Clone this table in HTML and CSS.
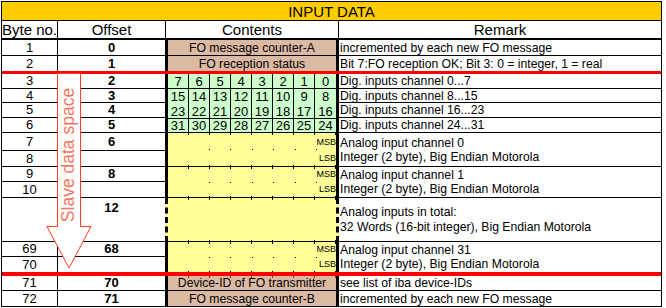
FILE: index.html
```html
<!DOCTYPE html>
<html>
<head>
<meta charset="utf-8">
<title>Input data</title>
<link rel="stylesheet" href="styles.css">
</head>
<body>
<div class="page">
  <div class="sheet">
    <div class="title">INPUT DATA</div>
    <div class="hd c1">Byte no.</div>
    <div class="hd c2">Offset</div>
    <div class="hd c3">Contents</div>
    <div class="hd c4">Remark</div>

    <div class="b">1</div><div class="o">0</div>
    <div class="ct tan">FO message counter-A</div>
    <div class="rm">incremented by each new FO message</div>

    <div class="b nb">2</div><div class="o nb">1</div>
    <div class="ct tan nb">FO reception status</div>
    <div class="rm nb">Bit 7:FO reception OK; Bit 3: 0 = integer, 1 = real</div>

    <div class="red"></div>

    <div class="b">3</div><div class="o">2</div>
    <div class="ct bits">
      <div class="bit">7</div><div class="bit">6</div><div class="bit">5</div><div class="bit">4</div><div class="bit">3</div><div class="bit">2</div><div class="bit">1</div><div class="bit">0</div>
      <div class="bit">15</div><div class="bit">14</div><div class="bit">13</div><div class="bit">12</div><div class="bit">11</div><div class="bit">10</div><div class="bit">9</div><div class="bit">8</div>
      <div class="bit">23</div><div class="bit">22</div><div class="bit">21</div><div class="bit">20</div><div class="bit">19</div><div class="bit">18</div><div class="bit">17</div><div class="bit">16</div>
      <div class="bit">31</div><div class="bit">30</div><div class="bit">29</div><div class="bit">28</div><div class="bit">27</div><div class="bit">26</div><div class="bit">25</div><div class="bit">24</div>
    </div>
    <div class="rm">Dig. inputs channel 0...7</div>

    <div class="b">4</div><div class="o">3</div>
    <div class="rm">Dig. inputs channel 8...15</div>
    <div class="b">5</div><div class="o">4</div>
    <div class="rm">Dig. inputs channel 16...23</div>
    <div class="b">6</div><div class="o">5</div>
    <div class="rm">Dig. inputs channel 24...31</div>

    <div class="b">7</div><div class="o">6</div>
    <div class="ct ana ch0"><div class="h">MSB</div><div class="h">LSB</div></div>
    <div class="rm two">Analog input channel 0<br>Integer (2 byte), Big Endian Motorola</div>
    <div class="b">8</div><div class="o"></div>

    <div class="b">9</div><div class="o">8</div>
    <div class="ct ana"><div class="h">MSB</div><div class="h">LSB</div></div>
    <div class="rm two">Analog input channel 1<br>Integer (2 byte), Big Endian Motorola</div>
    <div class="b">10</div><div class="o"></div>

    <div class="b"></div><div class="o top">12</div>
    <div class="ct ana tot"></div>
    <div class="rm tot">Analog inputs in total:<br>32 Words (16-bit integer), Big Endian Motorola</div>

    <div class="b">69</div><div class="o">68</div>
    <div class="ct ana nb"><div class="h">MSB</div><div class="h">LSB</div></div>
    <div class="rm two nb">Analog input channel 31<br>Integer (2 byte), Big Endian Motorola</div>
    <div class="b nb">70</div><div class="o nb"></div>

    <div class="red thick"></div>

    <div class="b">71</div><div class="o">70</div>
    <div class="ct tan tick">Device-ID of FO transmitter</div>
    <div class="rm">see list of iba device-IDs</div>

    <div class="b nb">72</div><div class="o nb">71</div>
    <div class="ct tan nb">FO message counter-B</div>
    <div class="rm nb">incremented by each new FO message</div>
  </div>

  <svg class="arrow" width="666" height="308" viewBox="0 0 666 308" xmlns="http://www.w3.org/2000/svg">
    <path d="M57.5 73.5 H80.5 V226.5 H91 L69 268 L47 226.5 H57.5 Z" fill="#fff" stroke="#ff3d22" stroke-width="1"/>
    <text transform="translate(73.5 155) rotate(-90)" text-anchor="middle" font-family="Liberation Sans, Arial, sans-serif" font-size="17.5" fill="#f5735f">Slave data space</text>
  </svg>
</div>
</body>
</html>
```

FILE: styles.css
```css
* { box-sizing: border-box; margin: 0; padding: 0; }
html, body { background: #fff; }
body { font-family: "Liberation Sans", Arial, sans-serif; color: #000; }

.page { position: relative; width: 666px; height: 308px; padding: 1px 0 0 1px; }

.sheet {
  display: grid;
  width: 661px;
  grid-template-columns: 56px 107px 174px 322px;
  grid-template-rows: 19px 19px 16px 15px 3px 15px 14px 15px 15px 18px 16px 15px 16px 44px 15px 15px 4px 15px 15px;
  border: 1px solid #000;
}

.title {
  grid-column: 1 / -1;
  background: #ffcc00;
  border-bottom: 1px solid #000;
  font-size: 15px;
  display: flex; align-items: center; justify-content: center;
}

.hd {
  font-size: 15px;
  white-space: nowrap;
  border-bottom: 2px solid #000;
  display: flex; align-items: center; justify-content: center;
}
.hd.c1 { border-right: 1px solid #000; }
.hd.c3 { border-left: 1px solid #000; border-right: 1px solid #000; }

.b, .o {
  font-size: 13px;
  line-height: 14px;
  border-bottom: 1px solid #000;
  display: flex; align-items: center; justify-content: center;
}
.b { border-right: 1px solid #000; }
.o { font-weight: bold; }
.o.top { align-items: flex-start; padding-top: 3px; }

.ct { border-left: 3px solid #000; border-right: 3px solid #000; }

.tan {
  background: #dcb9a3;
  border-bottom: 1px solid #000;
  font-size: 12.2px;
  line-height: 14px;
  white-space: nowrap;
  display: flex; align-items: center; justify-content: center;
}
.tan.tick {
  background: repeating-linear-gradient(90deg, transparent 0 20px, #f00 20px 21px) 0 0 / 100% 2px no-repeat, #dcb9a3;
}

.rm {
  font-size: 12.2px;
  line-height: 14px;
  padding-left: 1px;
  border-bottom: 1px solid #000;
  display: flex; align-items: center;
  white-space: nowrap;
}
.rm.two { grid-row: span 2; }
.rm.tot { line-height: 15px; }

.nb { border-bottom: 0 !important; }

.red { grid-column: 1 / -1; background: #f00; }

.bits {
  grid-row: span 4;
  display: grid;
  grid-template-columns: repeat(8, 1fr);
  grid-template-rows: 15px 15px 15px 14px;
  background: #ccffcc;
}
.bit {
  font-size: 13px;
  line-height: 13px;
  border-right: 1px solid #000;
  display: flex; align-items: center; justify-content: center;
}
.bit:nth-child(8n) { border-right: 0; }
.bit:nth-child(-n+8), .bit:nth-child(n+17) { border-bottom: 1px solid #000; }

.ana {
  grid-row: span 2;
  display: flex; flex-direction: column;
  border-bottom: 1px solid #000;
  background:
    repeating-linear-gradient(90deg, transparent 0 20px, #000 20px 21px) 0 0 / 100% 2px no-repeat,
    repeating-linear-gradient(90deg, transparent 0 20px, #000 20px 21px) 0 100% / 100% 1px no-repeat,
    repeating-linear-gradient(90deg, #000 0 1px, transparent 1px 21.5px) 41px 50% / 108px 1px no-repeat,
    #ffff99;
}
.ana.tot {
  grid-row: auto;
  border-left-style: dashed;
  border-right-style: dashed;
  background:
    repeating-linear-gradient(90deg, transparent 0 20px, #000 20px 21px) 0 0 / 100% 2px no-repeat,
    repeating-linear-gradient(90deg, transparent 0 20px, #000 20px 21px) 0 100% / 100% 1px no-repeat,
    #ffff99;
}
.ana .h {
  flex: 1;
  display: flex; align-items: flex-end; justify-content: flex-end;
  font-size: 9px; line-height: 9px;
  padding-bottom: 3px;
}

.arrow { position: absolute; left: 0; top: 0; pointer-events: none; }
```
